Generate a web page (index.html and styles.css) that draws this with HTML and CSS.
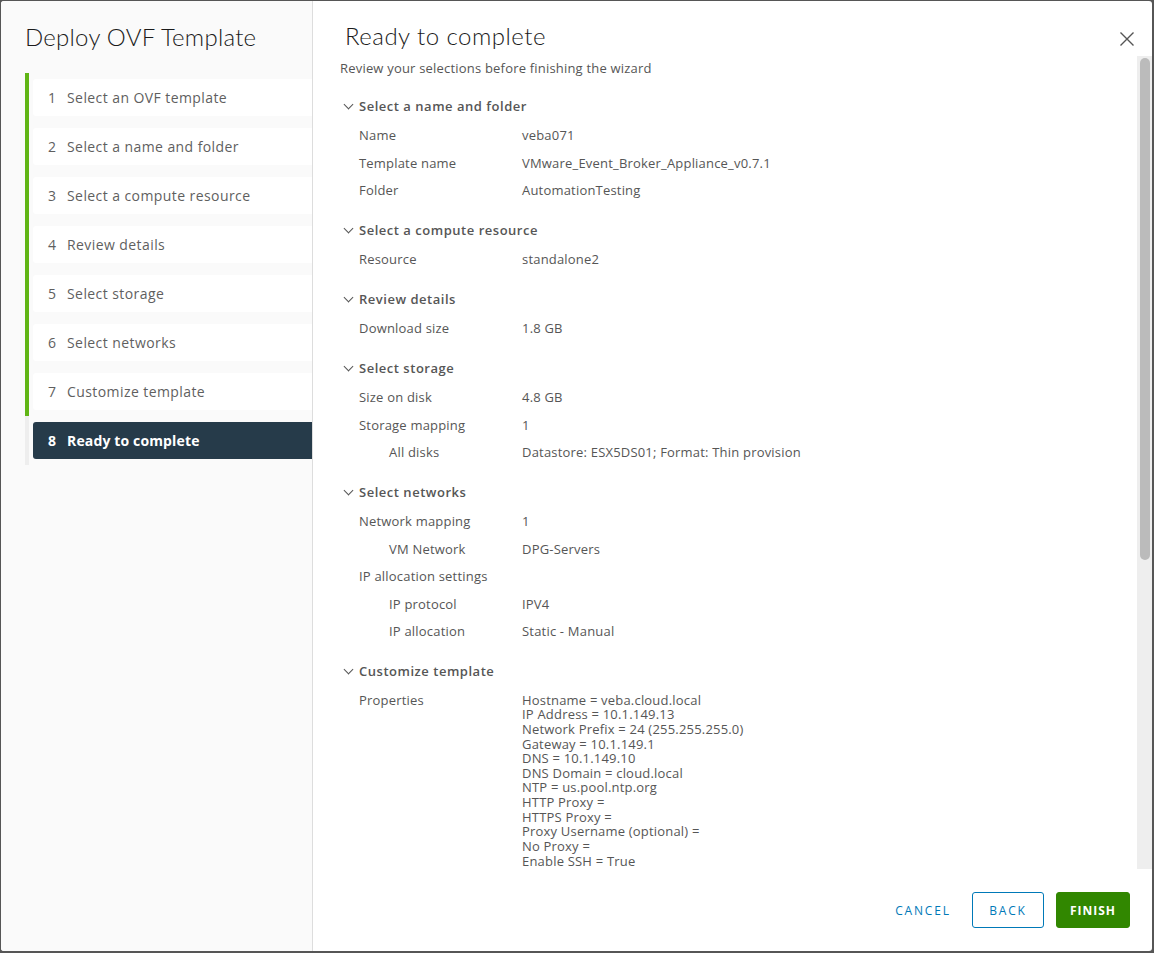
FILE: index.html
```html
<!DOCTYPE html>
<html lang="en">
<head>
    <meta charset="UTF-8">
    <title>Deploy OVF Template</title>
    <link rel="stylesheet" href="styles.css">
</head>
<body>
    <div class="modal">
        <aside class="sidebar">
            <h2 class="wizard-title">Deploy OVF Template</h2>
            <ol class="steps">
                <li class="step done"><div class="step-box"><span class="step-num">1</span>Select an OVF template</div></li>
                <li class="step done"><div class="step-box"><span class="step-num">2</span>Select a name and folder</div></li>
                <li class="step done"><div class="step-box"><span class="step-num">3</span>Select a compute resource</div></li>
                <li class="step done"><div class="step-box"><span class="step-num">4</span>Review details</div></li>
                <li class="step done"><div class="step-box"><span class="step-num">5</span>Select storage</div></li>
                <li class="step done"><div class="step-box"><span class="step-num">6</span>Select networks</div></li>
                <li class="step done"><div class="step-box"><span class="step-num">7</span>Customize template</div></li>
                <li class="step current"><div class="step-box"><span class="step-num">8</span>Ready to complete</div></li>
            </ol>
        </aside>

        <main class="panel">
            <header class="panel-head">
                <h3 class="panel-title">Ready to complete</h3>
                <button class="close" aria-label="Close">
                    <svg width="16" height="16" viewBox="0 0 16 16">
                        <path d="M1.5 1.5 L14.5 14.5 M14.5 1.5 L1.5 14.5" stroke="#555" stroke-width="1.4" fill="none"/>
                    </svg>
                </button>
            </header>

            <div class="panel-body">
                <div class="review">
                    <p class="intro">Review your selections before finishing the wizard</p>

                    <section class="group">
                        <h4 class="group-head"><span class="chev"></span>Select a name and folder</h4>
                        <div class="row"><span class="key">Name</span><span class="val">veba071</span></div>
                        <div class="row"><span class="key">Template name</span><span class="val">VMware_Event_Broker_Appliance_v0.7.1</span></div>
                        <div class="row"><span class="key">Folder</span><span class="val">AutomationTesting</span></div>
                    </section>

                    <section class="group">
                        <h4 class="group-head"><span class="chev"></span>Select a compute resource</h4>
                        <div class="row"><span class="key">Resource</span><span class="val">standalone2</span></div>
                    </section>

                    <section class="group">
                        <h4 class="group-head"><span class="chev"></span>Review details</h4>
                        <div class="row"><span class="key">Download size</span><span class="val">1.8 GB</span></div>
                    </section>

                    <section class="group">
                        <h4 class="group-head"><span class="chev"></span>Select storage</h4>
                        <div class="row"><span class="key">Size on disk</span><span class="val">4.8 GB</span></div>
                        <div class="row"><span class="key">Storage mapping</span><span class="val">1</span></div>
                        <div class="row sub"><span class="key">All disks</span><span class="val">Datastore: ESX5DS01; Format: Thin provision</span></div>
                    </section>

                    <section class="group">
                        <h4 class="group-head"><span class="chev"></span>Select networks</h4>
                        <div class="row"><span class="key">Network mapping</span><span class="val">1</span></div>
                        <div class="row sub"><span class="key">VM Network</span><span class="val">DPG-Servers</span></div>
                        <div class="row"><span class="key">IP allocation settings</span><span class="val"></span></div>
                        <div class="row sub"><span class="key">IP protocol</span><span class="val">IPV4</span></div>
                        <div class="row sub"><span class="key">IP allocation</span><span class="val">Static - Manual</span></div>
                    </section>

                    <section class="group">
                        <h4 class="group-head"><span class="chev"></span>Customize template</h4>
                        <div class="row props">
                            <span class="key">Properties</span>
                            <div class="val prop-lines">
                                <div>Hostname = veba.cloud.local</div>
                                <div>IP Address = 10.1.149.13</div>
                                <div>Network Prefix = 24 (255.255.255.0)</div>
                                <div>Gateway = 10.1.149.1</div>
                                <div>DNS = 10.1.149.10</div>
                                <div>DNS Domain = cloud.local</div>
                                <div>NTP = us.pool.ntp.org</div>
                                <div>HTTP Proxy =</div>
                                <div>HTTPS Proxy =</div>
                                <div>Proxy Username (optional) =</div>
                                <div>No Proxy =</div>
                                <div>Enable SSH = True</div>
                            </div>
                        </div>
                    </section>
                </div>

                <div class="scrollbar"><div class="thumb"></div></div>
            </div>

            <footer class="panel-foot">
                <button class="btn btn-link">Cancel</button>
                <button class="btn btn-outline">Back</button>
                <button class="btn btn-primary">Finish</button>
            </footer>
        </main>
    </div>
</body>
</html>
```

FILE: styles.css
```css
* {
    margin: 0;
    padding: 0;
    box-sizing: border-box;
}

body {
    background-color: #565656;
    font-family: 'Open Sans', 'Lato', sans-serif;
    color: #565656;
    height: 100vh;
    overflow: hidden;
}

.modal {
    margin: 1px 0 0 1px;
    width: 1151px;
    height: 950px;
    background-color: #ffffff;
    border-radius: 3px;
    display: flex;
    overflow: hidden;
}

/* left: wizard steps */

.sidebar {
    width: 312px;
    flex-shrink: 0;
    background-color: #fafafa;
    border-right: 1px solid #dddddd;
    padding: 20px 0 0 24px;
}

.wizard-title {
    font-family: 'Lato', sans-serif;
    font-size: 24px;
    font-weight: 300;
    color: #1b1b1b;
    line-height: 32px;
    margin-bottom: 20px;
    letter-spacing: 0.01em;
}

.steps {
    list-style: none;
}

.step {
    border-left: 4px solid #60b515;
    padding: 6px 0 6px 4px;
}

.step.current {
    border-left-color: #eeeeee;
}

.step-box {
    height: 37px;
    display: flex;
    align-items: center;
    padding-left: 15px;
    background-color: #ffffff;
    border-radius: 3px 0 0 3px;
    font-size: 14px;
    letter-spacing: 0.03em;
    color: #5f5f5f;
}

.step-num {
    width: 19px;
}

.current .step-box {
    background-color: #263b4a;
    color: #ffffff;
    font-weight: 700;
    letter-spacing: 0.01em;
}

/* right: review panel */

.panel {
    flex: 1;
    display: flex;
    flex-direction: column;
    min-width: 0;
}

.panel-head {
    height: 55px;
    display: flex;
    justify-content: space-between;
    align-items: flex-start;
    padding: 19px 17px 0 32px;
}

.panel-title {
    font-family: 'Lato', sans-serif;
    font-size: 24px;
    font-weight: 300;
    color: #1b1b1b;
    line-height: 32px;
    letter-spacing: 0.02em;
}

.close {
    background: none;
    border: none;
    margin-top: 11px;
    width: 16px;
    height: 16px;
    cursor: pointer;
}

.panel-body {
    flex: 1;
    display: flex;
    min-height: 0;
}

.review {
    flex: 1;
    overflow: hidden;
    padding: 2px 0 0 27px;
    font-size: 13px;
    letter-spacing: 0.015em;
}

.intro {
    line-height: 20px;
    margin-bottom: 18px;
}

.group {
    margin-bottom: 20px;
}

.group-head {
    display: flex;
    align-items: center;
    line-height: 20px;
    font-size: 13px;
    font-weight: 600;
    letter-spacing: 0.04em;
    padding-left: 4px;
    margin-bottom: 1.5px;
}

.chev {
    width: 7px;
    height: 7px;
    border-right: 1.5px solid #565656;
    border-bottom: 1.5px solid #565656;
    transform: rotate(45deg);
    margin: -4px 7px 0 1px;
}

.row {
    display: flex;
    padding: 7.5px 0 0 19px;
    line-height: 20px;
}

.key {
    width: 163px;
    flex-shrink: 0;
}

.sub .key {
    padding-left: 30px;
}

.props {
    padding-top: 7.5px;
}

.prop-lines {
    padding-top: 2.7px;
}

.prop-lines div {
    height: 14.64px;
    line-height: 14.64px;
}

.scrollbar {
    width: 15px;
    background-color: #eeeeee;
    padding: 2px 2px 0 3px;
}

.thumb {
    height: 502px;
    border-radius: 5px;
    background-color: #bbbbbb;
}

/* footer buttons */

.panel-foot {
    height: 82px;
    display: flex;
    justify-content: flex-end;
    align-items: flex-start;
    gap: 12px;
    padding: 23px 22px 0 0;
}

.btn {
    height: 36px;
    padding: 0 12px;
    border-radius: 3px;
    font-family: 'Open Sans', sans-serif;
    font-size: 12px;
    font-weight: 500;
    letter-spacing: 0.15em;
    text-transform: uppercase;
    cursor: pointer;
}

.btn-link {
    background: none;
    border: 1px solid transparent;
    color: #0079b8;
    width: 82px;
    margin-right: -4px;
}

.btn-outline {
    background-color: #ffffff;
    border: 1px solid #0079b8;
    color: #0079b8;
    width: 72px;
}

.btn-primary {
    background-color: #318700;
    border: 1px solid #318700;
    color: #ffffff;
    font-weight: 700;
    letter-spacing: 0.08em;
    width: 74px;
}
```
